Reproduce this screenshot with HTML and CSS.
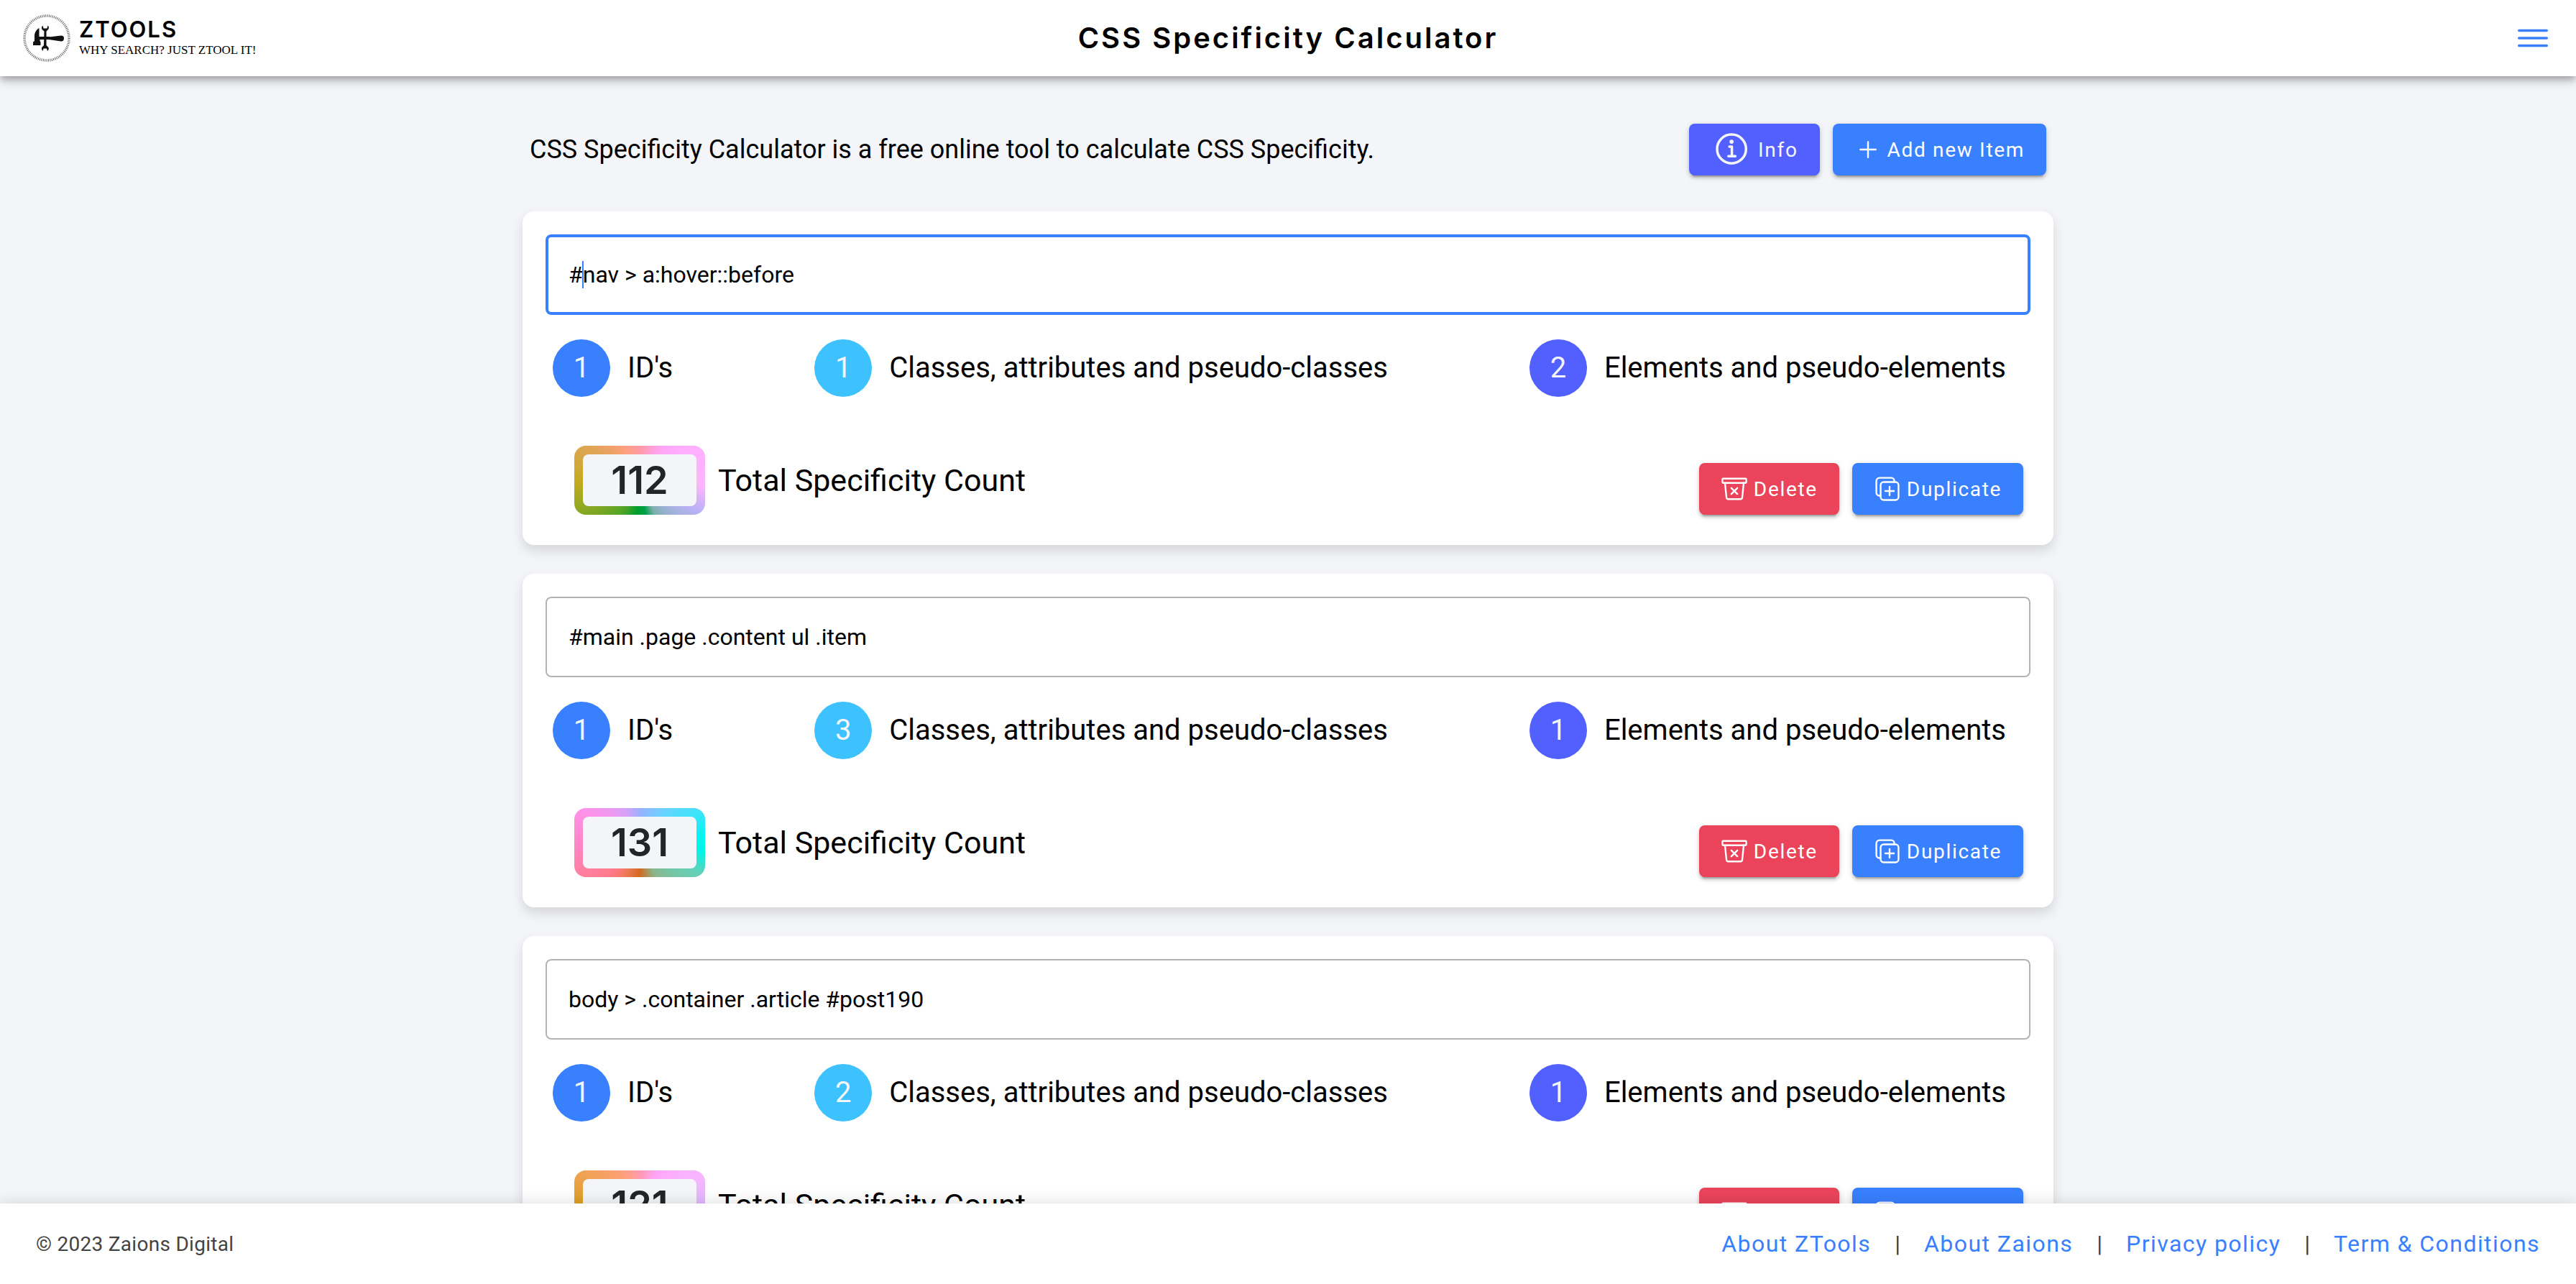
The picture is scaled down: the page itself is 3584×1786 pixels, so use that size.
FILE: index.html
```html
<!DOCTYPE html>
<html lang="en">
<head>
<meta charset="utf-8">
<meta name="viewport" content="width=device-width, initial-scale=1">
<title>CSS Specificity Calculator</title>
<link rel="stylesheet" href="styles.css">
</head>
<body>
<svg class="sprite" aria-hidden="true">
  <symbol id="trash" viewBox="0 0 512 512"><path d="M432 144l-28.67 275.74A32 32 0 01371.55 448H140.46a32 32 0 01-31.78-28.26L80 144"/><rect x="32" y="64" width="448" height="80" rx="16"/><path d="M312 240L200 352M312 352L200 240"/></symbol>
  <symbol id="duplicate" viewBox="0 0 512 512"><rect x="128" y="128" width="336" height="336" rx="57"/><path d="M383.5 128l.5-24a56.16 56.16 0 00-56-56H112a64.19 64.19 0 00-64 64v216a56.16 56.16 0 0056 56h24M296 216v160M376 296H216"/></symbol>
</svg>

<header class="header">
  <a class="brand" href="#" aria-label="ZTools home">
    <svg class="brand-mark" viewBox="0 0 66 66" aria-hidden="true">
      <circle cx="33" cy="33" r="31" fill="none" stroke="#666" stroke-width="3.500" stroke-dasharray="1 1.4" stroke-linecap="butt"/>
      <g fill="#111">
        <path d="M14 43V38.500L16 37V30C16 25 19 21 22.500 19V31H37V35H23.500V37L24.500 38.500V43Z"/>
        <path d="M36 31.500L53 29.500Q57 29.500 57 33Q57 37.500 53 37.500L36 35Z"/>
        <path d="M27.500 15.500Q25 18 26.500 21L29.500 23.500L29 43L26.500 45.500Q25 48 27.500 51L28.500 47.500H33L34 51Q37 48 35 45.500L32.500 43V23.500L35 21Q37 18 34.500 15.500L33.500 19.500H28.500Z"/>
      </g>
    </svg>
    <span class="brand-text"><span class="brand-name">ZTOOLS</span><span class="brand-tag">WHY SEARCH? JUST ZTOOL IT!</span></span>
  </a>
  <h1 class="title">CSS Specificity Calculator</h1>
  <button class="menu" type="button" aria-label="Menu"><svg viewBox="0 0 512 512"><path d="M80 160h352M80 256h352M80 352h352"/></svg></button>
</header>

<main class="main">
  <div class="container">
    <div class="intro">
      <p class="intro-text">CSS Specificity Calculator is a free online tool to calculate CSS Specificity.</p>
      <div class="intro-actions">
        <button class="btn btn-info" type="button"><svg class="icon-info" viewBox="0 0 512 512"><path d="M248 64C146.390 64 64 146.390 64 248s82.390 184 184 184 184-82.390 184-184S349.610 64 248 64z"/><path d="M220 220h32v116M208 340h88"/><circle class="dot" cx="248" cy="156" r="26"/></svg>Info</button>
        <button class="btn btn-primary" type="button"><svg class="icon" viewBox="0 0 512 512"><path d="M256 112v288M400 256H112"/></svg>Add new Item</button>
      </div>
    </div>

    <section class="card">
      <div class="field">
        <input class="input input-active" type="text" aria-label="Selector 1" value="#nav &gt; a:hover::before">
        <span class="caret"></span>
      </div>
      <div class="counts">
        <div class="count"><span class="circle ids">1</span>ID's</div>
        <div class="count"><span class="circle classes">1</span>Classes, attributes and pseudo-classes</div>
        <div class="count"><span class="circle elements">2</span>Elements and pseudo-elements</div>
      </div>
      <div class="summary">
        <div class="total"><span class="badge badge-amber"><span class="badge-value">112</span></span>Total Specificity Count</div>
        <div class="actions">
          <button class="btn btn-danger" type="button"><svg class="icon"><use href="#trash"/></svg>Delete</button>
          <button class="btn btn-primary" type="button"><svg class="icon"><use href="#duplicate"/></svg>Duplicate</button>
        </div>
      </div>
    </section>

    <section class="card">
      <div class="field">
        <input class="input" type="text" aria-label="Selector 2" value="#main .page .content ul .item">
      </div>
      <div class="counts">
        <div class="count"><span class="circle ids">1</span>ID's</div>
        <div class="count"><span class="circle classes">3</span>Classes, attributes and pseudo-classes</div>
        <div class="count"><span class="circle elements">1</span>Elements and pseudo-elements</div>
      </div>
      <div class="summary">
        <div class="total"><span class="badge badge-candy"><span class="badge-value">131</span></span>Total Specificity Count</div>
        <div class="actions">
          <button class="btn btn-danger" type="button"><svg class="icon"><use href="#trash"/></svg>Delete</button>
          <button class="btn btn-primary" type="button"><svg class="icon"><use href="#duplicate"/></svg>Duplicate</button>
        </div>
      </div>
    </section>

    <section class="card">
      <div class="field">
        <input class="input" type="text" aria-label="Selector 3" value="body &gt; .container .article #post190">
      </div>
      <div class="counts">
        <div class="count"><span class="circle ids">1</span>ID's</div>
        <div class="count"><span class="circle classes">2</span>Classes, attributes and pseudo-classes</div>
        <div class="count"><span class="circle elements">1</span>Elements and pseudo-elements</div>
      </div>
      <div class="summary">
        <div class="total"><span class="badge badge-peach"><span class="badge-value">121</span></span>Total Specificity Count</div>
        <div class="actions">
          <button class="btn btn-danger" type="button"><svg class="icon"><use href="#trash"/></svg>Delete</button>
          <button class="btn btn-primary" type="button"><svg class="icon"><use href="#duplicate"/></svg>Duplicate</button>
        </div>
      </div>
    </section>
  </div>
</main>

<footer class="footer">
  <span class="copyright">© 2023 Zaions Digital</span>
  <nav class="links">
    <a href="#">About ZTools</a><span>|</span>
    <a href="#">About Zaions</a><span>|</span>
    <a href="#">Privacy policy</a><span>|</span>
    <a href="#">Term &amp; Conditions</a>
  </nav>
</footer>
</body>
</html>
```

FILE: styles.css
```css
* { box-sizing: border-box; }

body {
  margin: 0;
  height: 100vh;
  display: flex;
  flex-direction: column;
  overflow: hidden;
  background: #f4f5f8;
  color: #000;
  font-family: Roboto, "Liberation Sans", sans-serif;
}

button, input { font-family: inherit; }

.sprite { display: none; }

svg {
  fill: none;
  stroke: currentColor;
  stroke-width: 32px;
  stroke-linecap: round;
  stroke-linejoin: round;
  flex: none;
}

/* Header */
.header {
  position: relative;
  z-index: 2;
  flex: none;
  display: grid;
  grid-template-columns: 1fr auto 1fr;
  align-items: center;
  height: 106px;
  padding: 0 32px;
  background: #fff;
  box-shadow: 0 4px 8px -2px rgba(0, 0, 0, .2), 0 8px 10px rgba(0, 0, 0, .14), 0 2px 20px rgba(0, 0, 0, .12);
}

.brand {
  display: flex;
  align-items: center;
  gap: 12px;
  color: #000;
  text-decoration: none;
}

.brand-mark { width: 66px; height: 66px; stroke: none; }

.brand-text { display: flex; flex-direction: column; }

.brand-name {
  font-family: Inter, sans-serif;
  font-size: 31px;
  line-height: 34px;
  font-weight: 600;
  letter-spacing: 2px;
}

.brand-tag {
  font-family: "Liberation Serif", serif;
  font-size: 17px;
  line-height: 24px;
}

.title {
  margin: 0;
  font-family: Inter, sans-serif;
  font-size: 40px;
  line-height: 48px;
  font-weight: 600;
  letter-spacing: 3px;
}

.menu {
  justify-self: end;
  display: flex;
  padding: 0;
  border: 0;
  background: none;
  color: #3880ff;
}

.menu svg { width: 56px; height: 56px; }

/* Content */
.main {
  flex: 1;
  min-height: 0;
  overflow-y: auto;
  scrollbar-width: none;
}

.container {
  display: flex;
  flex-direction: column;
  gap: 40px;
  width: 100%;
  max-width: 2130px;
  margin: 0 auto;
  padding: 66px 0 40px;
}

.intro {
  display: flex;
  align-items: center;
  justify-content: space-between;
  padding: 0 10px;
  margin-bottom: 10px;
}

.intro-text { margin: 0; font-size: 36px; line-height: 44px; }

.intro-actions, .actions { display: flex; gap: 18px; }

.btn {
  display: flex;
  align-items: center;
  height: 72px;
  padding: 0 30px;
  border: 0;
  border-radius: 8px;
  color: #fff;
  font-size: 28px;
  letter-spacing: .06em;
  white-space: nowrap;
  box-shadow: 0 6px 2px -4px rgba(0, 0, 0, .2), 0 4px 4px rgba(0, 0, 0, .14), 0 2px 10px rgba(0, 0, 0, .12);
}

.btn-primary { background: #3880ff; }
.btn-info { background: #5260ff; padding-left: 32px; color: #f4f5f8; }
.btn-danger { background: #eb445a; }

.icon { width: 38px; height: 38px; margin-right: 8px; }
.icon-info { width: 56px; height: 56px; margin-right: 8px; }
.dot { fill: currentColor; stroke: none; }

.card {
  padding: 32px;
  padding-bottom: 42px;
  border-radius: 16px;
  background: #fff;
  box-shadow: 0 8px 16px rgba(0, 0, 0, .13);
}

.field { position: relative; }

.input {
  display: block;
  width: 100%;
  height: 112px;
  padding: 0 30px;
  border: 2px solid #b3b3b3;
  border-radius: 8px;
  background: #fff;
  color: #000;
  font-size: 32px;
  outline: 0;
}

.input-active { padding: 0 28px; border: 4px solid #3880ff; }

.caret {
  position: absolute;
  left: 51px;
  top: 37px;
  width: 2px;
  height: 38px;
  background: #3880ff;
}

.counts {
  display: flex;
  justify-content: space-between;
  padding: 34px 34px 0 10px;
}

.count {
  display: flex;
  align-items: center;
  gap: 24px;
  font-size: 40px;
  line-height: 48px;
}

.circle {
  display: flex;
  align-items: center;
  justify-content: center;
  width: 80px;
  height: 80px;
  border-radius: 50%;
  color: #f4f5f8;
}

.ids { background: #3880ff; }
.classes { background: #3dc2ff; }
.elements { background: #5260ff; }

.summary {
  display: flex;
  align-items: flex-end;
  justify-content: space-between;
  padding: 68px 10px 0 40px;
}

.total {
  display: flex;
  align-items: center;
  gap: 18px;
  font-size: 43px;
  line-height: 48px;
}

.badge {
  padding: 12px;
  border-radius: 16px;
}

.badge-value {
  display: flex;
  align-items: center;
  justify-content: center;
  width: 158px;
  height: 72px;
  border-radius: 8px;
  background: #f4f5f8;
  color: #222428;
  font-family: Inter, sans-serif;
  font-size: 54px;
  font-weight: 600;
}

.badge-amber {
  background: conic-gradient(#ff9aa5, #ffa5f5 35deg, #ffb0ff 62deg, #fdb5fd 95deg, #b9b2f6 118deg, #80b0b0 155deg, #00a04a 170deg, #009e2c 185deg, #48a328 205deg, #8aa822 242deg, #c5ab20 270deg, #dca550 298deg, #ff9f80 335deg, #ff9aa5);
}

.badge-candy {
  background: conic-gradient(#9bb0ff, #70cfff 35deg, #42e3fa 62deg, #00f5f0 85deg, #00f5e6 98deg, #66cfb5 118deg, #8cb58a 155deg, #d2691e 180deg, #f07a5a 205deg, #ff7885 220deg, #ff7f9f 242deg, #ff85c8 270deg, #ff92e8 298deg, #d8a0f8 335deg, #9bb0ff);
}

.badge-peach {
  background: conic-gradient(#ff9ab0, #ffa5f8 30deg, #f8b5ff 62deg, #dcbaff 95deg, #b9b2f6 118deg, #009e2c 180deg, #c0a822 242deg, #dca020 270deg, #f0a255 298deg, #ff9f80 335deg, #ff9ab0);
}

/* Footer */
.footer {
  position: relative;
  z-index: 2;
  flex: none;
  display: flex;
  align-items: center;
  justify-content: space-between;
  height: 112px;
  padding: 0 50px;
  background: #fff;
  box-shadow: 0 -2px 20px rgba(0, 0, 0, .12);
}

.copyright { color: #444; font-size: 28px; letter-spacing: .01em; }

.links {
  display: flex;
  gap: 33px;
  font-size: 32px;
  letter-spacing: .045em;
}

.links a { color: #3880ff; text-decoration: none; }
.links span { color: #444; letter-spacing: 0; }
```
